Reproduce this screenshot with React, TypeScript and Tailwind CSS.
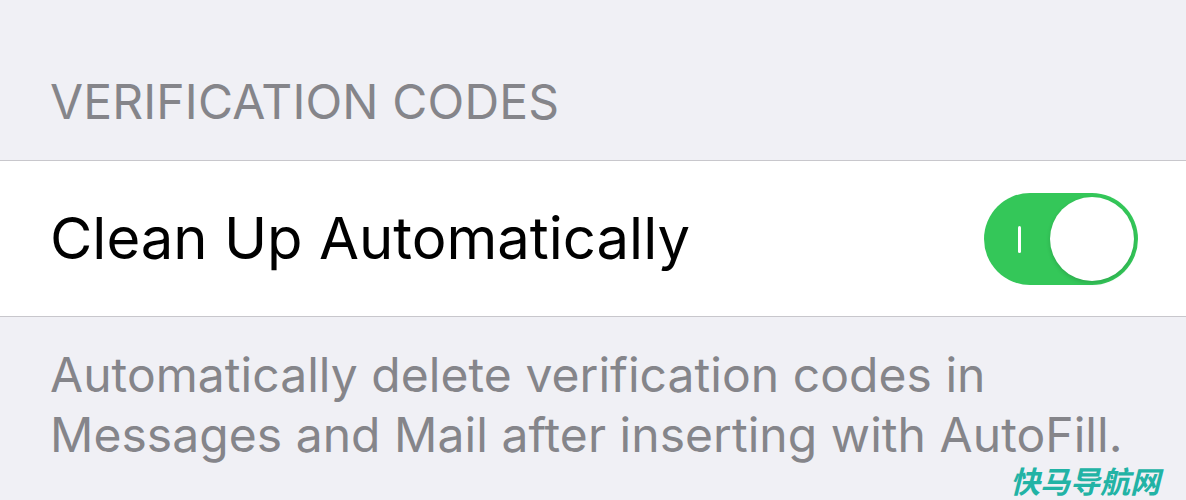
import React from "react";

const Toggle: React.FC = () => {
  return (
    <div className="relative w-[154px] h-[92px] rounded-full bg-[#34c759] shrink-0">
      <div className="absolute left-[34px] top-[33px] w-[3px] h-[27px] bg-white rounded-sm" />
      <div className="absolute right-[4px] top-[4px] w-[84px] h-[84px] rounded-full bg-white shadow-[0_2px_4px_rgba(0,0,0,0.15)]" />
    </div>
  );
};

export default function App() {
  return (
    <div className="w-[1186px] h-[500px] bg-[#f0f0f5] font-['Inter','Liberation_Sans',sans-serif] overflow-hidden flex flex-col">
      <div className="h-[160px] flex items-end px-[50px] pb-[34px]">
        <span className="text-[48px] leading-none text-[#85858a] tracking-[0.15px]">VERIFICATION CODES</span>
      </div>
      <div className="h-[157px] bg-white border-y border-[#c8c7cc] flex items-center justify-between pl-[50px] pr-[48px]">
        <span className="text-[58px] text-black tracking-[0px]">Clean Up Automatically</span>
        <Toggle />
      </div>
      <div className="relative flex-1 px-[50px] pt-[28px]">
        <p className="text-[48px] leading-[60px] text-[#85858a] tracking-[0.05px]">
          Automatically delete verification codes in
          <br />
          Messages and Mail after inserting with AutoFill.
        </p>
        <span className="absolute right-[26px] bottom-[6px] text-[30px] leading-[28px] font-bold italic text-[#22b3a5] font-['Noto_Sans_CJK_SC',sans-serif]">快马导航网</span>
      </div>
    </div>
  );
}
